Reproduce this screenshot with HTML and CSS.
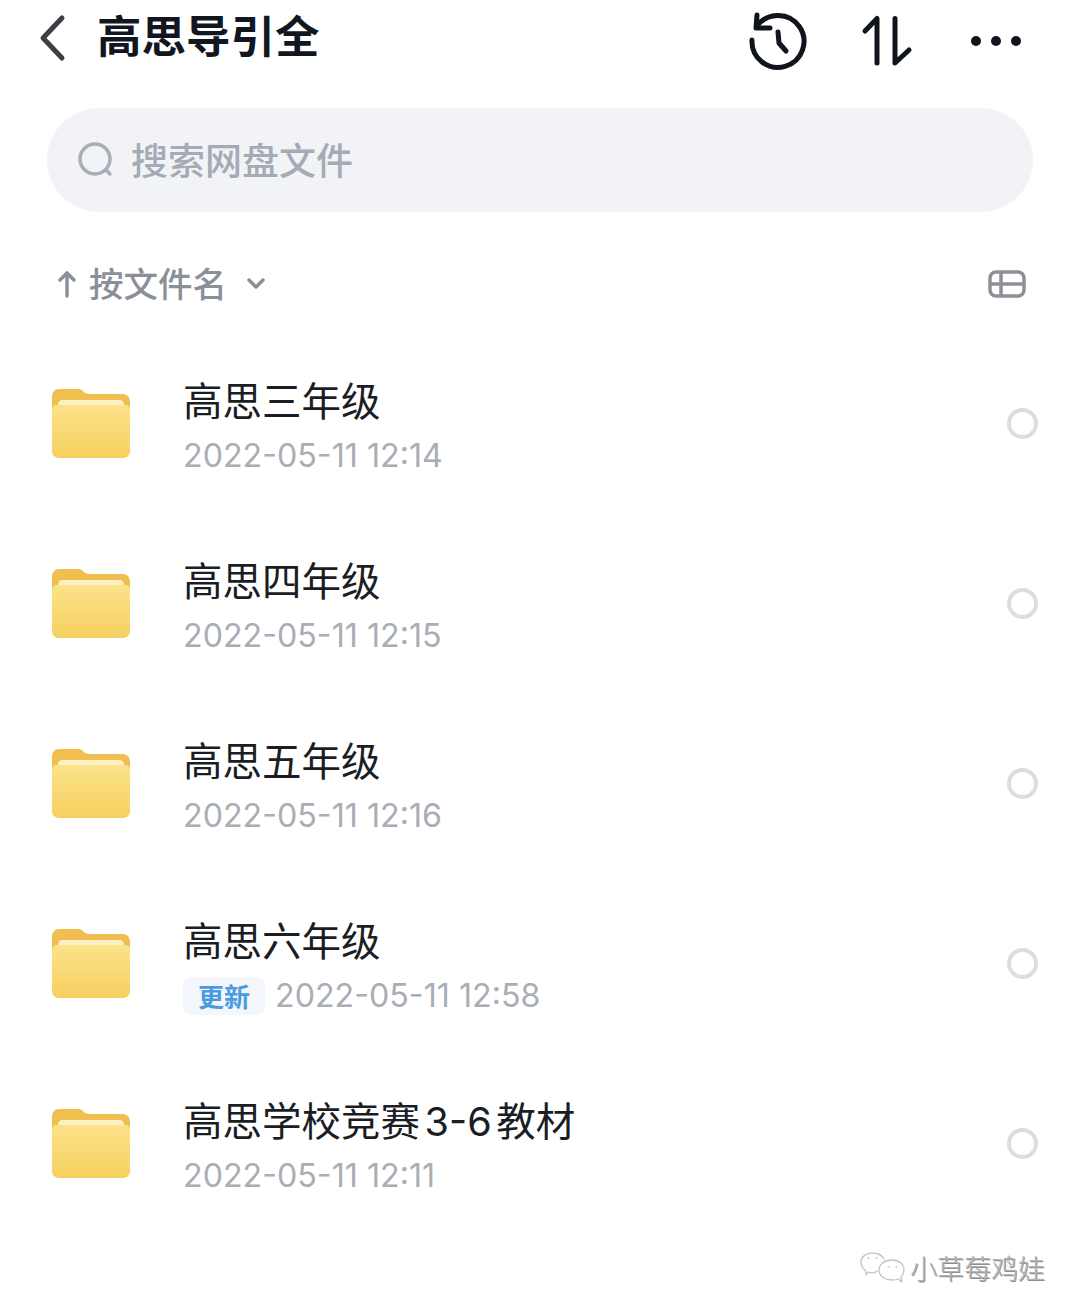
FILE: index.html
```html
<!DOCTYPE html>
<html>
  <head>
    <meta charset="utf-8">
    <title>高思导引全</title>
    <link rel="stylesheet" href="styles.css">
  </head>
  <body>
    <svg width="0" height="0" class="defs">
      <defs>
        <linearGradient id="folderFront" x1="0" y1="0" x2="0" y2="1">
          <stop offset="0" stop-color="#fbe38a"/>
          <stop offset="1" stop-color="#f6cf60"/>
        </linearGradient>
        <symbol id="folder" viewBox="0 0 80 70">
          <path d="M1 8C1 3 4 0 8 0H27C32 0 33 5 38 5H72C76 5 79 8 79 13V30H1Z" fill="#f0bf50"/>
          <path d="M7 16C7 13 9 11 11 11H69C71 11 73 13 73 16V22H7Z" fill="#fdf0c4"/>
          <path d="M1 21C1 18 3 16 6 16H74C77 16 79 18 79 21V62C79 66 76 69 72 69H8C4 69 1 66 1 62Z" fill="url(#folderFront)"/>
        </symbol>
      </defs>
    </svg>

    <header class="topbar">
      <svg class="back" width="28" height="48" viewBox="0 0 28 48">
        <path d="M23 4L4 24L23 44" fill="none" stroke="#3c3f44" stroke-width="5" stroke-linecap="round" stroke-linejoin="round"/>
      </svg>
      <h1 class="title">高思导引全</h1>
      <div class="actions">
        <svg width="60" height="60" viewBox="0 0 60 60" fill="none" stroke="#10141d" stroke-width="5" stroke-linecap="round" stroke-linejoin="round">
          <path d="M4 29A26 26 0 1 0 9 15"/>
          <path d="M9 4L8 17L22 17"/>
          <path d="M30 21L31 32L38 40"/>
        </svg>
        <svg width="54" height="54" viewBox="0 0 54 54" fill="none" stroke="#10141d" stroke-width="5" stroke-linecap="round" stroke-linejoin="round">
          <path d="M6 17L18 4.500V49"/>
          <path d="M36 4.500V49L50 36"/>
        </svg>
        <svg width="52" height="12" viewBox="0 0 52 12" fill="#10141d">
          <circle cx="6" cy="6" r="5"/>
          <circle cx="26" cy="6" r="5"/>
          <circle cx="46" cy="6" r="5"/>
        </svg>
      </div>
    </header>

    <div class="search">
      <svg width="38" height="38" viewBox="0 0 38 38" fill="none" stroke="#a8adb8" stroke-width="3.5" stroke-linecap="round">
        <circle cx="18" cy="18" r="15"/>
        <path d="M29 29L33 33"/>
      </svg>
      <span class="search-text">搜索网盘文件</span>
    </div>

    <div class="sortbar">
      <svg class="sort-arrow" width="20" height="28" viewBox="0 0 20 28" fill="none" stroke="#8a8f98" stroke-width="3.5" stroke-linecap="round" stroke-linejoin="round">
        <path d="M3 10L10 3L17 10"/>
        <path d="M10 3V26"/>
      </svg>
      <span class="sort-text">按文件名</span>
      <svg class="sort-caret" width="18" height="12" viewBox="0 0 18 12" fill="none" stroke="#8a8f98" stroke-width="3.5" stroke-linecap="round" stroke-linejoin="round">
        <path d="M2 2L9 9L16 2"/>
      </svg>
      <svg class="view-toggle" width="38" height="28" viewBox="0 0 38 28" fill="none" stroke="#8d9197" stroke-width="3.5">
        <rect x="2" y="2" width="34" height="24" rx="6"/>
        <path d="M2 14H36M13 2V26"/>
      </svg>
    </div>

    <ul class="files">
      <li class="file">
        <svg class="folder" width="80" height="70"><use href="#folder"/></svg>
        <div class="file-info">
          <div class="file-name">高思三年级</div>
          <div class="file-meta">2022-05-11 12:14</div>
        </div>
        <span class="radio"></span>
      </li>
      <li class="file">
        <svg class="folder" width="80" height="70"><use href="#folder"/></svg>
        <div class="file-info">
          <div class="file-name">高思四年级</div>
          <div class="file-meta">2022-05-11 12:15</div>
        </div>
        <span class="radio"></span>
      </li>
      <li class="file">
        <svg class="folder" width="80" height="70"><use href="#folder"/></svg>
        <div class="file-info">
          <div class="file-name">高思五年级</div>
          <div class="file-meta">2022-05-11 12:16</div>
        </div>
        <span class="radio"></span>
      </li>
      <li class="file">
        <svg class="folder" width="80" height="70"><use href="#folder"/></svg>
        <div class="file-info">
          <div class="file-name">高思六年级</div>
          <div class="file-meta"><span class="tag">更新</span>2022-05-11 12:58</div>
        </div>
        <span class="radio"></span>
      </li>
      <li class="file">
        <svg class="folder" width="80" height="70"><use href="#folder"/></svg>
        <div class="file-info">
          <div class="file-name">高思学校竞赛 3-6 教材</div>
          <div class="file-meta">2022-05-11 12:11</div>
        </div>
        <span class="radio"></span>
      </li>
    </ul>

    <div class="watermark">
      <svg width="46" height="32" viewBox="0 0 46 32" fill="none" stroke="#c4c4c4" stroke-width="1.3" stroke-linecap="round" stroke-linejoin="round">
        <path d="M17 19C15 21 11 21 8 20L6 23L5.500 18.500C2 16 1 13 1 10C1 5 6 1 12 1C18 1 22 3 24 7"/>
        <path d="M44 18C44 12 39 8 32 8C25 8 19 12 19 18C19 24 25 28 32 28C34 28 36 28 38 27L42 30L41 25C43 23 44 21 44 18Z"/>
        <path d="M8 6H9M16 6H17M28 15H29M36 15H37"/>
      </svg>
      <span class="watermark-text">小草莓鸡娃</span>
    </div>
  </body>
</html>
```

FILE: styles.css
```css
* {
  box-sizing: border-box;
}

body {
  margin: 0;
  height: 1316px;
  position: relative;
  overflow: hidden;
  background-color: #ffffff;
  font-family: "Noto Sans CJK SC", "Noto Sans", sans-serif;
}

.defs {
  position: absolute;
}

.topbar {
  display: flex;
  align-items: center;
  height: 80px;
  padding-left: 39px;
  padding-right: 58px;
}

.back {
  margin-right: 30px;
  margin-bottom: 5px;
}

.title {
  margin: 0 0 12px;
  font-size: 44.500px;
  font-weight: 700;
  line-height: 70px;
  color: #12161f;
}

.actions {
  display: flex;
  align-items: center;
  margin-top: 2px;
  margin-left: auto;
}

.actions svg:nth-child(1) {
  margin-right: 51px;
}

.actions svg:nth-child(2) {
  margin-right: 57px;
}

.search {
  display: flex;
  align-items: center;
  height: 104px;
  margin: 28px 47px 0;
  padding-left: 30px;
  border-radius: 52px;
  background-color: #f1f3f7;
}

.search-text {
  margin-left: 16px;
  margin-bottom: 2px;
  font-size: 37px;
  font-weight: 500;
  color: #a5aab5;
}

.sortbar {
  display: flex;
  align-items: center;
  height: 50px;
  margin-top: 47px;
  padding-left: 57px;
  padding-right: 54px;
  color: #8a8f98;
}

.sort-text {
  margin-left: 12px;
  margin-bottom: 4px;
  font-size: 34.500px;
  font-weight: 500;
}

.sort-caret {
  margin-left: 20px;
}

.view-toggle {
  margin-left: auto;
}

.files {
  list-style: none;
  margin: 24px 0 0;
  padding: 0;
}

.file {
  display: flex;
  align-items: center;
  height: 180px;
  padding-left: 51px;
  padding-right: 42px;
}

.folder {
  margin-top: 2px;
  flex: none;
}

.file-info {
  margin-left: 52px;
  padding-top: 11px;
}

.file-name {
  font-family: "Inter", "Noto Sans CJK SC", sans-serif;
  font-size: 39.500px;
  line-height: 54px;
  word-spacing: -6.500px;
  color: #1a1d24;
}

.file-meta {
  display: flex;
  align-items: center;
  height: 54px;
  font-family: "Inter", "Noto Sans", sans-serif;
  font-size: 32.200px;
  color: #a9aeb5;
}

.tag {
  display: flex;
  align-items: center;
  justify-content: center;
  width: 82px;
  height: 38px;
  margin-right: 10px;
  border-radius: 8px;
  background-color: #f3f6fa;
  color: #4a9be0;
  font-family: "Noto Sans CJK SC", sans-serif;
  font-size: 26px;
  font-weight: 700;
}

.radio {
  width: 31px;
  height: 31px;
  margin-left: auto;
  border: 4px solid #dcdddf;
  border-radius: 50%;
}

.watermark {
  position: absolute;
  left: 860px;
  top: 1248px;
  display: flex;
  align-items: center;
}

.watermark-text {
  margin-left: 4px;
  font-size: 27px;
  font-weight: 300;
  color: #b4b4b4;
  text-shadow: 1px 1px 0 #8f8f8f;
}
```
